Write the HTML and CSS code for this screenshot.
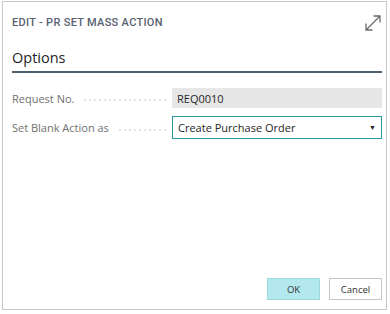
FILE: index.html
```html
<!DOCTYPE html>
<html>
<head>
<meta charset="utf-8">
<link rel="stylesheet" href="styles.css">
</head>
<body>
<div class="dialog">
  <div class="header">
    <div class="title">EDIT - PR SET MASS ACTION</div>
    <svg class="expand" width="18" height="18" viewBox="0 0 18 18">
      <path d="M2 16 L16 2 M9.5 2 H16 V8.5 M2 9.5 V16 H8.5" fill="none" stroke="#6b6b6b" stroke-width="1.3"/>
    </svg>
  </div>
  <div class="section">
    <h2 class="section-title">Options</h2>
    <div class="rows">
      <div class="row">
        <div class="label"><span class="label-text">Request No.</span><span class="leader"></span></div>
        <div class="field readonly">REQ0010</div>
      </div>
      <div class="row">
        <div class="label"><span class="label-text">Set Blank Action as</span><span class="leader"></span></div>
        <div class="field select">
          <span>Create Purchase Order</span>
          <span class="caret">▼</span>
        </div>
      </div>
    </div>
  </div>
  <div class="footer">
    <button class="btn primary">OK</button>
    <button class="btn">Cancel</button>
  </div>
</div>
</body>
</html>
```

FILE: styles.css
```css
html, body {
  margin: 0;
  padding: 0;
  background: #ffffff;
}
body {
  font-family: "Open Sans", "Noto Sans", sans-serif;
  width: 390px;
  height: 314px;
  padding: 1px 0 0 2px;
  box-sizing: border-box;
}
.dialog {
  width: 385px;
  height: 309px;
  border: 1px solid #c8c8c8;
  box-sizing: border-box;
  display: flex;
  flex-direction: column;
  padding: 0 4px 0 9px;
}
.header {
  display: flex;
  justify-content: space-between;
  align-items: center;
  height: 38px;
  padding-top: 1px;
}
.title {
  font-family: "Roboto", sans-serif;
  font-size: 11px;
  font-weight: 500;
  color: #58616f;
  letter-spacing: 0.3px;
}
.expand {
  margin-top: 2px;
}
.section-title {
  margin: 7px 0 0 0;
  font-size: 14.5px;
  font-weight: 500;
  color: #1e1e1e;
  height: 23px;
  line-height: 20px;
  border-bottom: 2px solid #505d6d;
}
.rows {
  display: flex;
  flex-direction: column;
  gap: 8px;
  margin-top: 15px;
}
.row {
  display: flex;
  align-items: center;
}
.label {
  width: 160px;
  display: flex;
  align-items: center;
  font-size: 11px;
  color: #707070;
  white-space: nowrap;
}
.leader {
  flex: 1;
  height: 2px;
  margin: 4px 6px 0 10px;
  background-image: radial-gradient(circle at 1px 1px, #c4c4c4 0.5px, transparent 0.9px);
  background-size: 5px 2px;
  background-repeat: repeat-x;
}
.field {
  flex: 1;
  height: 21px;
  box-sizing: border-box;
  font-size: 11px;
  color: #262626;
  display: flex;
  align-items: center;
  padding-left: 5px;
}
.readonly {
  background: #e7e7e7;
  height: 20px;
}
.select {
  height: 23px;
  border: 1.5px solid #2a9a9f;
  justify-content: space-between;
  padding-right: 5px;
}
.caret {
  font-size: 7px;
  color: #222;
}
.footer {
  margin-top: auto;
  display: flex;
  justify-content: flex-end;
  gap: 9px;
  padding-bottom: 9px;
}
.btn {
  width: 53px;
  height: 22px;
  border: 1px solid #c5c5c5;
  background: #ffffff;
  font-family: "Open Sans", "Noto Sans", sans-serif;
  font-size: 9.5px;
  color: #333;
  padding: 0;
}
.btn.primary {
  background: #b3e9ee;
  border-color: #9fd8dd;
}
```
